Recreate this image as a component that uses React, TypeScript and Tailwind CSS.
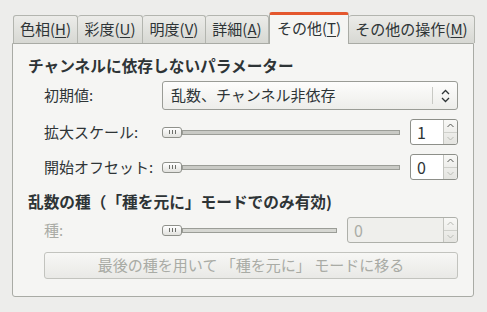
import type { ReactNode } from "react";

const font = "font-['Noto_Sans_CJK_JP','Noto_Sans',sans-serif] [text-spacing-trim:space-all]";

function Tab({ label, mn, active, width }: { label: string; mn: string; active?: boolean; width: string }) {
    if (active) {
        return (
            <div className={`${width} h-[32px] -mb-px relative z-10 flex items-center justify-center rounded-t-[3px] border border-b-0 border-[#a9aba5] bg-[#f5f5f3] border-t-[3px] border-t-[#e4572e] text-[15px] text-[#2e3436]`}>
                <span className="-mt-[2px]">{label}(<span className="underline underline-offset-2">{mn}</span>)</span>
            </div>
        )
    }
    return (
        <div className={`${width} h-[28px] flex items-center justify-center rounded-t-[3px] border border-b-0 border-l-0 first:border-l border-[#b3b5af] bg-gradient-to-b from-[#ecece9] to-[#d7d8d3] text-[15px] text-[#2e3436]`}>
            <span>{label}(<span className="underline underline-offset-2">{mn}</span>)</span>
        </div>
    )
}

function Slider({ width, disabled }: { width: string; disabled?: boolean }) {
    return (
        <div className={`${width} flex items-center`}>
            <div className="w-[20px] h-[11px] shrink-0 rounded-[3px] border border-[#8f918b] bg-gradient-to-b from-[#ffffff] to-[#e2e2de] flex items-center justify-center gap-[2px]">
                <div className="w-px h-[4px] bg-[#6d6f6a]" />
                <div className="w-px h-[4px] bg-[#6d6f6a]" />
                <div className="w-px h-[4px] bg-[#6d6f6a]" />
            </div>
            <div className={`flex-1 h-[5px] border border-[#9b9d97] ${disabled ? "bg-[#d6d7d2]" : "bg-[#c9cac5]"}`} />
        </div>
    )
}

function Spin({ value, width, disabled }: { value: string; width: string; disabled?: boolean }) {
    return (
        <div className={`${width} h-[26px] flex rounded-[3px] border ${disabled ? "border-[#aeb0aa] bg-[#efefec]" : "border-[#8d8f89] bg-white"}`}>
            <div className={`flex-1 flex items-center pl-[6px] text-[16px] ${disabled ? "text-[#aaaca6]" : "text-[#2e3436]"}`}>{value}</div>
            <div className="w-[14px] flex flex-col border-l border-[#c3c4bf] bg-gradient-to-b from-[#f8f8f6] to-[#e4e4e0] rounded-r-[3px]">
                <div className="flex-1 flex items-center justify-center border-b border-[#cfd0cb]">
                    <svg width="7" height="5" viewBox="0 0 7 5"><path d="M0.5 4 L3.5 1 L6.5 4" fill="none" stroke={disabled ? "#b5b7b1" : "#555753"} strokeWidth="1" /></svg>
                </div>
                <div className="flex-1 flex items-center justify-center">
                    <svg width="7" height="5" viewBox="0 0 7 5"><path d="M0.5 1 L3.5 4 L6.5 1" fill="none" stroke="#b9bbb5" strokeWidth="1" /></svg>
                </div>
            </div>
        </div>
    )
}

function Row({ label, children, disabled, h }: { label: string; children: ReactNode; disabled?: boolean; h: string }) {
    return (
        <div className={`flex items-center ${h} pl-[16px]`}>
            <div className={`w-[118px] shrink-0 text-[15px] ${disabled ? "text-[#a9aba5]" : "text-[#2e3436]"}`}>{label}</div>
            <div className="flex-1 flex items-center">{children}</div>
        </div>
    )
}

export default function App() {
    return (
        <div className={`w-[487px] h-[312px] bg-[#ededeb] pt-[12px] px-[12px] ${font}`}>
            <div className="flex items-end h-[31px] pl-px">
                <Tab label="色相" mn="H" width="w-[65px]" />
                <Tab label="彩度" mn="U" width="w-[65px]" />
                <Tab label="明度" mn="V" width="w-[63px]" />
                <Tab label="詳細" mn="A" width="w-[63px]" />
                <Tab label="その他" mn="T" width="w-[80px]" active />
                <Tab label="その他の操作" mn="M" width="w-[126px]" />
            </div>
            <div className="w-[462px] h-[254px] border border-[#a9aba5] rounded-b-[3px] bg-[#f5f5f3] pt-[12px] px-[15px]">
                <div className="h-[20px] flex items-center text-[15.7px] font-bold text-[#2e3436]">チャンネルに依存しないパラメーター</div>
                <div className="mt-[5px] flex flex-col">
                    <Row label="初期値:" h="h-[29px]">
                        <div className="w-[296px] h-[29px] flex items-center rounded-[3px] border border-[#9a9c96] bg-gradient-to-b from-[#fdfdfc] to-[#ededea]">
                            <div className="flex-1 pl-[8px] text-[15px] text-[#2e3436]">乱数、チャンネル非依存</div>
                            <div className="w-px h-[17px] bg-[#c8c9c4]" />
                            <div className="w-[24px] flex items-center justify-center">
                                <svg width="9" height="14" viewBox="0 0 9 14">
                                    <path d="M1 5 L4.5 1.5 L8 5" fill="none" stroke="#2e3436" strokeWidth="1.3" />
                                    <path d="M1 9 L4.5 12.5 L8 9" fill="none" stroke="#2e3436" strokeWidth="1.3" />
                                </svg>
                            </div>
                        </div>
                    </Row>
                    <div className="h-[9px]" />
                    <Row label="拡大スケール:" h="h-[26px]">
                        <Slider width="w-[238px]" />
                        <div className="w-[10px]" />
                        <Spin value="1" width="w-[48px]" />
                    </Row>
                    <div className="h-[9px]" />
                    <Row label="開始オフセット:" h="h-[26px]">
                        <Slider width="w-[238px]" />
                        <div className="w-[10px]" />
                        <Spin value="0" width="w-[48px]" />
                    </Row>
                </div>
                <div className="mt-[12px] h-[20px] flex items-center text-[15.7px] font-bold text-[#2e3436]">乱数の種（「種を元に」モードでのみ有効)</div>
                <div className="mt-[5px] flex flex-col">
                    <Row label="種:" h="h-[26px]" disabled>
                        <Slider width="w-[175px]" disabled />
                        <div className="w-[10px]" />
                        <Spin value="0" width="w-[111px]" disabled />
                    </Row>
                    <div className="h-[9px]" />
                    <div className="pl-[16px]">
                        <div className="h-[27px] w-[414px] flex items-center justify-center rounded-[3px] border border-[#c2c3be] bg-gradient-to-b from-[#f7f7f5] to-[#e9e9e6] text-[15px] text-[#a9aba5]">
                            最後の種を用いて 「種を元に」 モードに移る
                        </div>
                    </div>
                </div>
            </div>
        </div>
    )
}
